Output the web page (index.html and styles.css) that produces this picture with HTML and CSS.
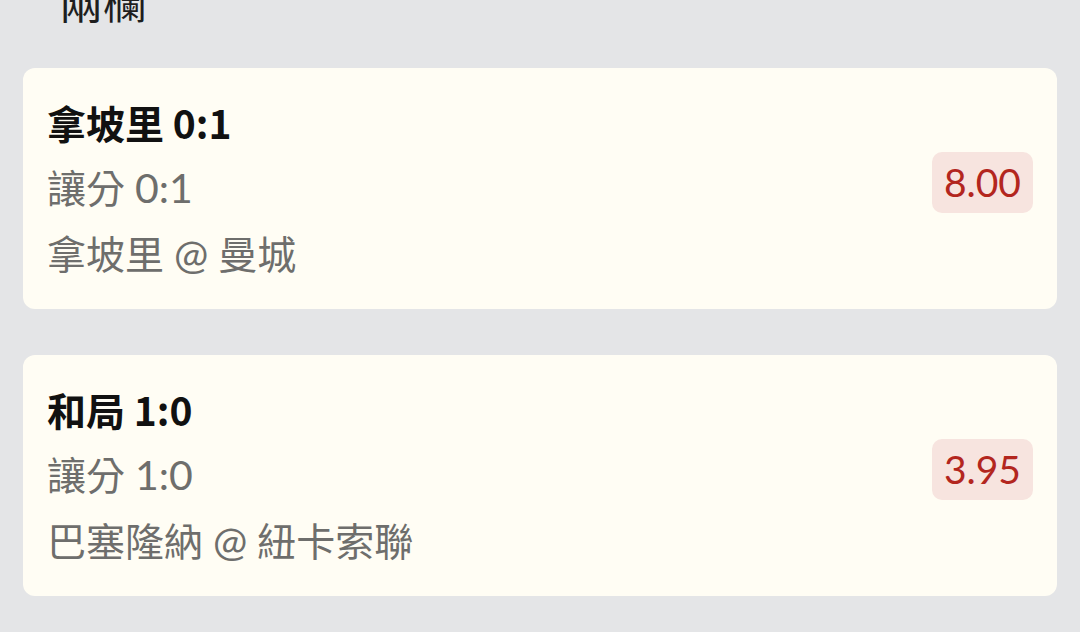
FILE: index.html
```html
<!DOCTYPE html>
<html lang="zh-Hant">
<head>
<meta charset="utf-8">
<title>兩欄</title>
<link rel="stylesheet" href="styles.css">
</head>
<body>
<main class="page">
  <h2 class="section-title">兩欄</h2>
  <section class="card">
    <div class="card-text">
      <div class="card-title">拿坡里 0:1</div>
      <div class="card-line">讓分 <span class="latin">0:1</span></div>
      <div class="card-line">拿坡里 <span class="latin">@</span> 曼城</div>
    </div>
    <div class="odds">8.00</div>
  </section>
  <section class="card">
    <div class="card-text">
      <div class="card-title">和局 1:0</div>
      <div class="card-line">讓分 <span class="latin">1:0</span></div>
      <div class="card-line">巴塞隆納 <span class="latin">@</span> 紐卡索聯</div>
    </div>
    <div class="odds">3.95</div>
  </section>
</main>
</body>
</html>
```
FILE: styles.css
```css
html, body {
  margin: 0;
  padding: 0;
  background: #e4e5e7;
  overflow: hidden;
}

.page {
  display: flex;
  flex-direction: column;
  gap: 46px;
  padding: 0 23px;
  font-family: "Lato", "Noto Sans CJK TC", sans-serif;
}

.section-title {
  margin: -30px 0 -8px;
  padding-left: 36px;
  font-family: "Noto Sans CJK TC", sans-serif;
  font-size: 44px;
  font-weight: 400;
  line-height: 60px;
  color: #1e1e1e;
}

.card {
  display: flex;
  align-items: center;
  justify-content: space-between;
  background: #fffdf4;
  border-radius: 12px;
  padding: 21px 24px 22px 24px;
}

.card-text {
  display: flex;
  flex-direction: column;
}

.card-title {
  font-family: "Noto Sans CJK TC", sans-serif;
  font-weight: 700;
  font-size: 39px;
  line-height: 66px;
  color: #111111;
}

.card-line {
  font-size: 39px;
  line-height: 66px;
  color: #6e6e6c;
}

.latin {
  font-size: 41px;
}

.odds {
  margin-bottom: 12px;
  padding: 7px 12px;
  border-radius: 10px;
  background: #f7e4df;
  color: #b3261e;
  font-size: 39px;
  line-height: 47px;
}
```
